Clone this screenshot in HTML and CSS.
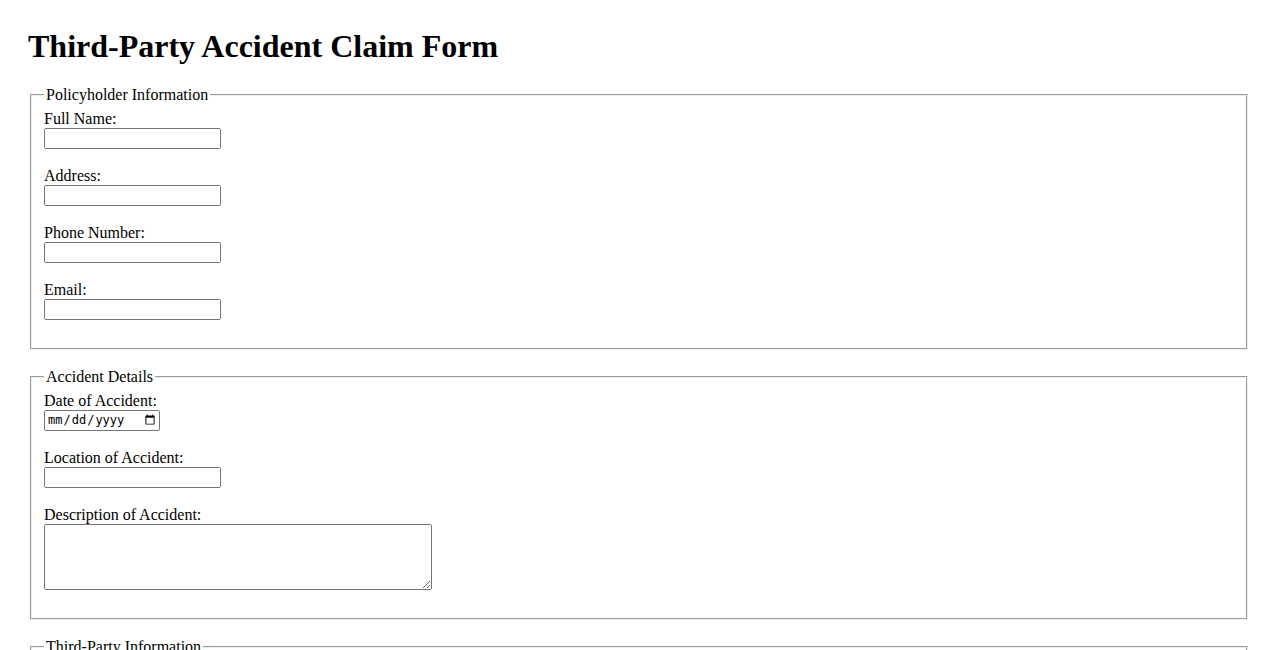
FILE: index.html
```html
<!DOCTYPE html>
<html lang="en">
<head>
<meta charset="utf-8">
<title>Third-Party Accident Claim Form</title>
<link rel="stylesheet" href="styles.css">
</head>
<body>
<div class="page">
  <h1 class="title">Third-Party Accident Claim Form</h1>
  <form class="claim-form">
    <fieldset class="section">
      <legend>Policyholder Information</legend>
      <label for="name">Full Name:</label><br>
      <input class="field" type="text" id="name" name="name"><br><br>
      <label for="address">Address:</label><br>
      <input class="field" type="text" id="address" name="address"><br><br>
      <label for="phone">Phone Number:</label><br>
      <input class="field" type="tel" id="phone" name="phone"><br><br>
      <label for="email">Email:</label><br>
      <input class="field" type="email" id="email" name="email"><br><br>
    </fieldset>
    <fieldset class="section">
      <legend>Accident Details</legend>
      <label for="date">Date of Accident:</label><br>
      <input class="field field-date" type="date" id="date" name="date"><br><br>
      <label for="location">Location of Accident:</label><br>
      <input class="field" type="text" id="location" name="location"><br><br>
      <label for="description">Description of Accident:</label><br>
      <textarea class="area" id="description" name="description" rows="4" cols="50"></textarea><br><br>
    </fieldset>
    <fieldset class="section">
      <legend>Third-Party Information</legend>
      <label for="tp-name">Full Name:</label><br>
      <input class="field" type="text" id="tp-name" name="tp-name"><br><br>
      <label for="tp-address">Address:</label><br>
      <input class="field" type="text" id="tp-address" name="tp-address"><br><br>
    </fieldset>
  </form>
</div>
</body>
</html>
```
FILE: styles.css
```css
body {
  margin: 8px;
  font-family: "Liberation Serif", "Times New Roman", serif;
  font-size: 16px;
  color: #000;
  background: #fff;
}
.page {
  padding: 20px;
}
.title {
  margin: 0 0 0.67em;
  font-size: 2em;
  font-weight: bold;
}
.section {
  margin: 0 2px 18px;
}
.field {
  box-sizing: border-box;
  width: 177px;
  height: 21px;
}
.field-date {
  width: 116px;
  font-size: 12px;
}
.area {
  box-sizing: border-box;
  width: 388px;
  height: 66px;
  vertical-align: top;
}
```
